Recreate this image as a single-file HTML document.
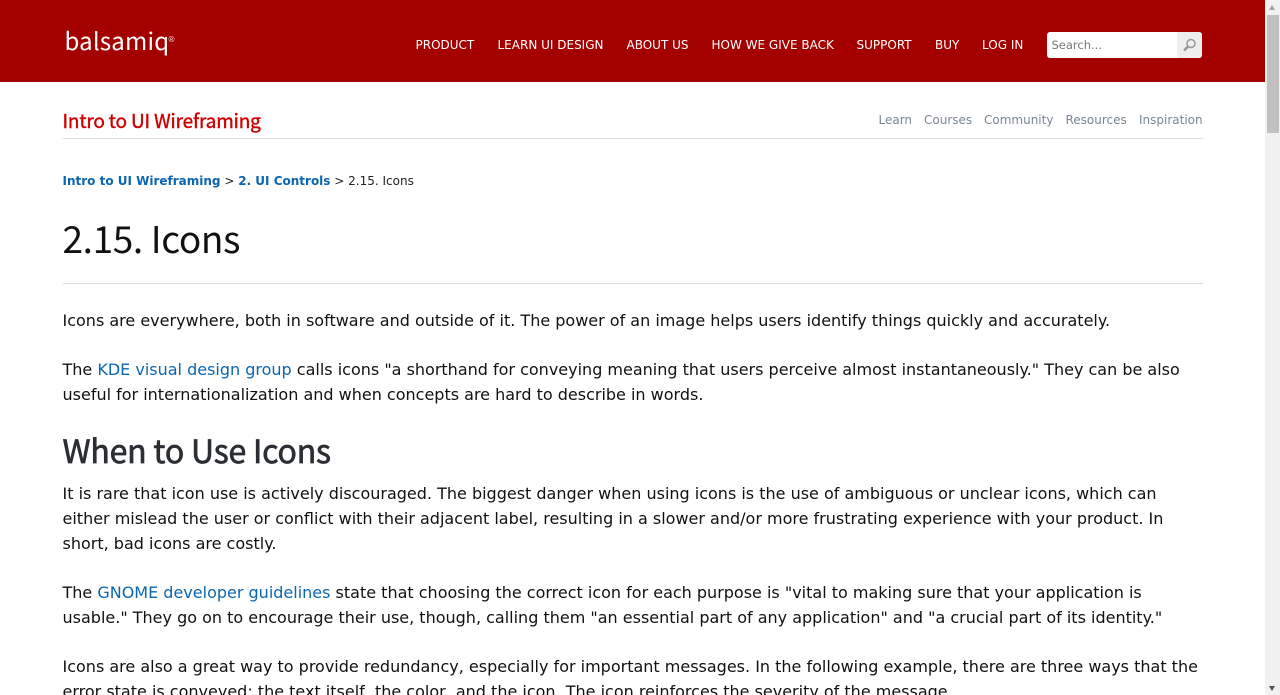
<!DOCTYPE html>
<html lang="en"><head><meta charset="utf-8"><title>2.15. Icons</title>
<style>
html,body{margin:0;padding:0;width:1280px;height:695px;overflow:hidden;background:#fff}
body{position:relative;font-family:"DejaVu Sans",sans-serif;color:#111}
.a{position:absolute;white-space:nowrap;margin:0}
a{color:#0b66b0;text-decoration:none}
.hd{position:absolute;left:0;top:0;width:1265px;height:82px;background:#a50000}
.nav{font-size:12px;line-height:16px;top:37px;color:#fff}
.sub{font-size:12px;line-height:16px;top:112px;color:#7b8794}
.p{font-size:16px;line-height:25px;left:62.5px;color:#111}
.m{font-family:"Noto Sans CJK JP","Liberation Sans",sans-serif}
</style></head><body>
<div class="hd"></div>
<div class="a m" style="left:64.500px;top:22px;font-size:24px;line-height:36px;color:#fff;font-weight:400;letter-spacing:.2px">balsamiq</div>
<div class="a" style="left:167.500px;top:35px;font-size:8px;line-height:10px;color:#f0d0d0">®</div>
<div class="a nav" style="left:415.500px">PRODUCT</div>
<div class="a nav" style="left:497.500px">LEARN UI DESIGN</div>
<div class="a nav" style="left:626.500px">ABOUT US</div>
<div class="a nav" style="left:711.500px">HOW WE GIVE BACK</div>
<div class="a nav" style="left:856.500px">SUPPORT</div>
<div class="a nav" style="left:935px">BUY</div>
<div class="a nav" style="left:982px">LOG IN</div>
<div class="a" style="left:1047px;top:32px;width:155px;height:26px;background:#fff;border-radius:3px;overflow:hidden">
<div class="a" style="left:4.500px;top:5px;font-size:11.500px;line-height:16px;color:#777">Search...</div>
<div class="a" style="left:130px;top:0;width:25px;height:26px;background:#eee"></div>
<svg class="a" style="left:134px;top:4px" width="18" height="18" viewBox="0 0 18 18" fill="none" stroke="#999"><circle cx="10" cy="7.500" r="4" stroke-width="1.500"/><path d="M7 10.500L3 14.500" stroke-width="2.500"/></svg>
</div>
<div class="a" style="left:1265px;top:0;width:15px;height:695px;background:#f1f1f1"></div>
<div class="a" style="left:1267px;top:15px;width:12px;height:118px;background:#c1c1c1"></div>
<div class="a" style="left:1269px;top:5px;width:0;height:0;border-left:3.500px solid transparent;border-right:3.500px solid transparent;border-bottom:5px solid #a3a3a3"></div>
<div class="a" style="left:1269px;top:686px;width:0;height:0;border-left:3.500px solid transparent;border-right:3.500px solid transparent;border-top:5px solid #505050"></div>
<div class="a m" style="left:62.500px;top:107px;font-size:19px;line-height:28px;font-weight:400;color:#d00000;letter-spacing:-.16px;-webkit-text-stroke:.4px #d00000">Intro to UI Wireframing</div>
<div class="a sub" style="left:878.500px">Learn</div>
<div class="a sub" style="left:924px">Courses</div>
<div class="a sub" style="left:984px">Community</div>
<div class="a sub" style="left:1065.500px">Resources</div>
<div class="a sub" style="left:1139px">Inspiration</div>
<div class="a" style="left:62.500px;top:138px;width:1140px;height:1px;background:#ddd"></div>
<div class="a" style="left:62.500px;top:173px;font-size:12px;line-height:16px;color:#222"><a href="#" style="font-weight:700">Intro to UI Wireframing</a> &gt; <a href="#" style="font-weight:700">2. UI Controls</a> &gt; 2.15. Icons</div>
<h1 class="a m" style="left:62.500px;top:210px;font-size:37px;line-height:54px;font-weight:400;color:#111;letter-spacing:-.37px">2.15. Icons</h1>
<div class="a" style="left:62.500px;top:283px;width:1140px;height:1px;background:#ddd"></div>
<p class="a p" style="top:308px">Icons are everywhere, both in software and outside of it. The power of an image helps users identify things quickly and accurately.</p>
<p class="a p" style="top:357px">The <a href="#">KDE visual design group</a> calls icons "a shorthand for conveying meaning that users perceive almost instantaneously." They can be also<br>useful for internationalization and when concepts are hard to describe in words.</p>
<h2 class="a m" style="left:62.500px;top:426px;font-size:32px;line-height:48px;font-weight:400;color:#2b2f33;letter-spacing:-.2px;-webkit-text-stroke:.7px #2b2f33">When to Use Icons</h2>
<p class="a p" style="top:481px">It is rare that icon use is actively discouraged. The biggest danger when using icons is the use of ambiguous or unclear icons, which can<br>either mislead the user or conflict with their adjacent label, resulting in a slower and/or more frustrating experience with your product. In<br>short, bad icons are costly.</p>
<p class="a p" style="top:580px">The <a href="#">GNOME developer guidelines</a> state that choosing the correct icon for each purpose is "vital to making sure that your application is<br>usable." They go on to encourage their use, though, calling them "an essential part of any application" and "a crucial part of its identity."</p>
<p class="a p" style="top:654px">Icons are also a great way to provide redundancy, especially for important messages. In the following example, there are three ways that the<br>error state is conveyed: the text itself, the color, and the icon. The icon reinforces the severity of the message.</p>
</body></html>
